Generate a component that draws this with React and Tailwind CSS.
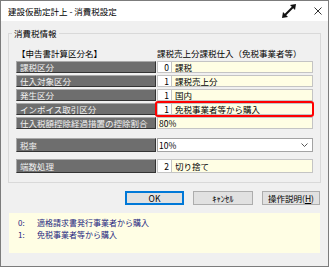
import React from 'react';

const font = { fontFamily: '"Noto Sans CJK JP", "Noto Sans", sans-serif' };

function Label({ children, tall }) {
  return (
    <div
      className={`w-[140px] shrink-0 ${tall ? 'h-[14px]' : 'h-[12px]'} bg-[#6e6e6e] border border-t-[#a9a9a9] border-l-[#a9a9a9] border-r-[#333333] border-b-[#333333] text-[#f2f2f2] pl-[3px] flex items-center whitespace-nowrap overflow-hidden`}
    >
      {children}
    </div>
  );
}

function CodeValue({ code, text, tall }) {
  return (
    <div className={`ml-[1px] flex-1 flex ${tall ? 'h-[14px]' : 'h-[12px]'} border border-[#c4c4c4]`}>
      <div className="w-[14px] bg-white border-r border-[#c4c4c4] text-right pr-[2px] flex items-center justify-end">{code}</div>
      <div className="flex-1 bg-[#fffee4] pl-[3px] flex items-center">{text}</div>
    </div>
  );
}

export default function App() {
  const rows = [
    { label: '課税区分', code: '0', text: '課税' },
    { label: '仕入対象区分', code: '1', text: '課税売上分' },
    { label: '発生区分', code: '1', text: '国内' },
    { label: 'インボイス取引区分', code: '1', text: '免税事業者等から購入', mark: true },
  ];

  return (
    <div style={font} className="w-[329px] h-[267px] bg-[#f0f0f0] border border-[#7c7c7c] flex flex-col text-[8.5px] leading-[12px] text-black">
      <div className="h-[20px] bg-white flex items-center pl-[7px] shrink-0">
        <span className="text-[8.5px]">建設仮勘定計上 - 消費税設定</span>
        <div className="ml-auto flex items-center">
          <svg width="16" height="16" viewBox="0 0 16 16" className="mr-[17px]">
            <line x1="3.5" y1="12.5" x2="12.5" y2="3.5" stroke="#111" strokeWidth="2" />
            <polygon points="15,1 9,2 14,7" fill="#111" />
            <polygon points="1,15 7,14 2,9" fill="#111" />
          </svg>
          <svg width="8" height="8" viewBox="0 0 8 8" className="mr-[6px]">
            <line x1="0.5" y1="0.5" x2="7.5" y2="7.5" stroke="#333" strokeWidth="1" />
            <line x1="7.5" y1="0.5" x2="0.5" y2="7.5" stroke="#333" strokeWidth="1" />
          </svg>
        </div>
      </div>

      <fieldset className="mx-[7px] mt-[5px] border border-[#d9d9d9] px-0 pb-[9px]">
        <legend className="ml-[3px] px-[2px] leading-[14px]">消費税情報</legend>
        <div className="px-[7px]">
          <div className="mt-[7px] flex h-[12px] items-center">
            <span className="w-[141px] shrink-0 pl-[1px]">【申告書計算区分名】</span>
            <span>課税売上分課税仕入（免税事業者等）</span>
          </div>

          <div className="mt-[2px] flex flex-col gap-[2px]">
            {rows.map((r) => (
              <div key={r.label} className="flex">
                <Label>{r.label}</Label>
                <div className="relative flex-1 flex">
                  <CodeValue code={r.code} text={r.text} />
                  {r.mark && (
                    <div className="absolute -left-[1px] -right-[1px] -top-[2px] -bottom-[2px] border-2 border-[#ff0000] rounded-[3px]" />
                  )}
                </div>
              </div>
            ))}
            <div className="flex">
              <Label>仕入税額控除経過措置の控除割合</Label>
              <div className="ml-[1px] flex-1 h-[12px] border border-[#c4c4c4] bg-[#fffee4] pl-[1px] flex items-center">80%</div>
            </div>
          </div>

          <div className="mt-[9px] flex">
            <Label tall>税率</Label>
            <div className="ml-[1px] flex-1 h-[14px] border border-[#a3a3a3] bg-white pl-[1px] flex items-center">
              <span>10%</span>
              <svg width="7" height="5" viewBox="0 0 7 5" className="ml-auto mr-[4px]">
                <polyline points="0.5,0.5 3.5,3.5 6.5,0.5" fill="none" stroke="#555" strokeWidth="1" />
              </svg>
            </div>
          </div>

          <div className="mt-[7px] flex">
            <Label tall>端数処理</Label>
            <CodeValue code="2" text="切り捨て" tall />
          </div>
        </div>
      </fieldset>

      <div className="mt-[8px] flex justify-end gap-[9px] pr-[8px]">
        <button className="w-[59px] h-[14px] bg-[#e1e1e1] border-2 border-[#0078d7] flex items-center justify-center leading-none">OK</button>
        <button className="w-[60px] h-[14px] bg-[#e1e1e1] border border-[#adadad] flex items-center justify-center leading-none">ｷｬﾝｾﾙ</button>
        <button className="w-[58px] h-[14px] bg-[#e1e1e1] border border-[#adadad] flex items-center justify-center leading-none">
          操作説明(<span className="underline">H</span>)
        </button>
      </div>

      <div className="mt-[8px] mx-[8px] h-[40px] bg-[#fffee4] pt-[4px] pl-[9px] text-[8px] leading-[12px] text-[#262680]">
        <div className="flex">
          <span className="w-[19px]">0:</span>
          <span>適格請求書発行事業者から購入</span>
        </div>
        <div className="flex">
          <span className="w-[19px]">1:</span>
          <span>免税事業者等から購入</span>
        </div>
      </div>
    </div>
  );
}
